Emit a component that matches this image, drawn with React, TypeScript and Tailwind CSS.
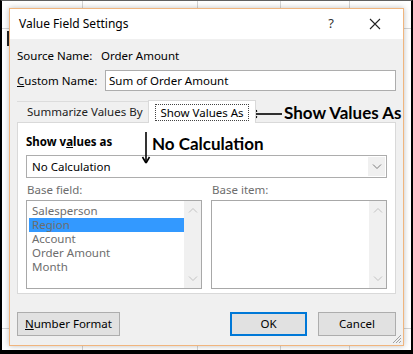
import React from 'react';

const ui = "font-['Segoe_UI','Noto_Sans',sans-serif]";

const Chevron = ({ up = false, color = '#606060' }: { up?: boolean; color?: string }) => (
  <svg width="10" height="6" viewBox="0 0 10 6" className="block">
    <path d={up ? 'M1 5.5 L5 1.5 L9 5.5' : 'M1 0.5 L5 4.5 L9 0.5'} fill="none" stroke={color} strokeWidth="1" />
  </svg>
);

const ListBox = ({ items, selected }: { items: string[]; selected?: number }) => (
  <div className="flex h-[89px] w-[177px] border border-[#a8a8a8] bg-white">
    <div className="flex flex-1 flex-col pl-[2px] pt-[3px]">
      {items.map((item, i) => (
        <div
          key={item}
          className={`h-[14px] pl-[3px] text-[11.5px] leading-[14px] text-[#6d6d6d] ${i === selected ? 'bg-[#3399ff]' : ''}`}
        >
          {item}
        </div>
      ))}
    </div>
    <div className="flex w-[17px] flex-col items-center justify-between bg-[#f0f0f0] py-[6px]">
      <Chevron up color="#c2c2c2" />
      <Chevron color="#c2c2c2" />
    </div>
  </div>
);

export default function App() {
  return (
    <div className={`relative h-[354px] w-[413px] overflow-hidden border-x-2 border-b-4 border-t border-x-black border-b-black border-t-[#606060] bg-white ${ui}`}>
      {/* sheet grid behind the dialog */}
      <div className="absolute left-[80px] top-0 h-full w-px bg-[#d4d4d4]" />
      <div className="absolute left-[195px] top-0 h-full w-px bg-[#d4d4d4]" />
      <div className="absolute left-[278px] top-0 h-full w-px bg-[#d4d4d4]" />
      <div className="absolute left-[347px] top-0 h-full w-px bg-[#d4d4d4]" />
      <div className="absolute left-0 top-[27px] h-px w-full bg-[#d4d4d4]" />
      <div className="absolute left-0 top-[327px] h-px w-full bg-[#d4d4d4]" />
      <div className="absolute left-[5px] top-[30px] h-[15px] w-[2px] bg-[#222]" />

      {/* dialog */}
      <div className="relative ml-[7px] mt-[7px] flex h-[338px] w-[395px] flex-col border border-[#f0b57e] bg-[#f0f0f0] shadow-[0_0_6px_rgba(0,0,0,0.25)]">
        <div className="flex h-[30px] items-center bg-white pl-[9px] text-[12px] text-black">
          <span className="flex-1">Value Field Settings</span>
          <span className="mr-[35px] text-[13px] text-[#333]">?</span>
          <svg width="12" height="12" viewBox="0 0 12 12" className="mr-[22px]">
            <path d="M1 1 L11 11 M11 1 L1 11" stroke="#222" strokeWidth="1.1" />
          </svg>
        </div>

        <div className="flex flex-1 flex-col px-[7px] text-[11.5px] text-black">
          <div className="mt-[8px] flex h-[17px] items-center">
            <span className="w-[84px]">Source Name:</span>
            <span>Order Amount</span>
          </div>
          <div className="mt-[6px] flex items-center">
            <span className="w-[88px]">
              <span className="underline">C</span>ustom Name:
            </span>
            <div className="flex h-[21px] flex-1 items-center border border-[#adadad] bg-white pl-[3px]">
              Sum of Order Amount
            </div>
          </div>

          {/* tabs */}
          <div className="mt-[9px] flex h-[22px] items-end">
            <div className="flex h-[21px] w-[131px] items-center border-t border-[#dcdcdc] pl-[10px] text-[#222]">
              Summarize Values By
            </div>
            <div className="relative z-10 -mb-px flex h-[23px] w-[108px] items-center justify-center border-x border-t border-[#d9d9d9] bg-white">
              <span className="border border-dotted border-[#444] px-[4px] leading-[15px]">Show Values As</span>
            </div>
          </div>
          <div className="flex h-[172px] flex-col border border-[#d9d9d9] bg-white px-[8px]">
            <div className="mt-[10px] h-[17px] font-bold">
              Show v<span className="underline">a</span>lues as
            </div>
            <div className="mt-[5px] flex h-[23px] items-center border border-[#adadad]">
              <span className="flex-1 pl-[5px]">No Calculation</span>
              <div className="m-px flex h-[19px] w-[17px] items-center justify-center bg-[#f0f0f0]">
                <Chevron color="#7a7a7a" />
              </div>
            </div>
            <div className="mt-[3px] flex h-[17px] items-center text-[#6d6d6d]">
              <span className="w-[186px] pl-px">Base field:</span>
              <span>Base item:</span>
            </div>
            <div className="mt-[2px] flex gap-[9px]">
              <ListBox items={['Salesperson', 'Region', 'Account', 'Order Amount', 'Month']} selected={1} />
              <ListBox items={[]} />
            </div>
          </div>

          {/* buttons */}
          <div className="mt-[18px] flex items-center">
            <button className="h-[24px] w-[103px] border border-[#adadad] bg-[#e1e1e1] text-[11.5px]">
              <span className="underline">N</span>umber Format
            </button>
            <div className="flex-1" />
            <button className="h-[24px] w-[77px] border-2 border-[#0078d7] bg-[#e1e1e1] text-[11.5px]">OK</button>
            <button className="ml-[11px] h-[24px] w-[78px] border border-[#adadad] bg-[#e1e1e1] text-[11.5px]">Cancel</button>
          </div>
        </div>

        {/* resize grip */}
        <svg width="10" height="10" viewBox="0 0 10 10" className="absolute bottom-[1px] right-[1px]">
          <path d="M9 1 L1 9 M9 4 L4 9 M9 7 L7 9" stroke="#a0a0a0" strokeWidth="1" />
        </svg>
      </div>

      {/* annotations */}
      <svg width="32" height="10" viewBox="0 0 32 10" className="absolute left-[249px] top-[108px]">
        <path d="M1 5 L31 5" stroke="#000" strokeWidth="1.6" />
        <path d="M1 5 L6 1.5 M1 5 L6 8.5" stroke="#000" strokeWidth="1.6" fill="none" />
      </svg>
      <span className="absolute left-[282px] top-[101px] font-['Lato',sans-serif] text-[17px] font-bold leading-[22px] text-black">
        Show Values As
      </span>
      <svg width="10" height="34" viewBox="0 0 10 34" className="absolute left-[139px] top-[130px]">
        <path d="M5 1 L5 32" stroke="#000" strokeWidth="1.6" />
        <path d="M5 32 L1.5 26 M5 32 L8.5 26" stroke="#000" strokeWidth="1.6" fill="none" />
      </svg>
      <span className="absolute left-[150px] top-[132px] font-['Lato',sans-serif] text-[17px] font-bold leading-[22px] text-black">
        No Calculation
      </span>
    </div>
  );
}
